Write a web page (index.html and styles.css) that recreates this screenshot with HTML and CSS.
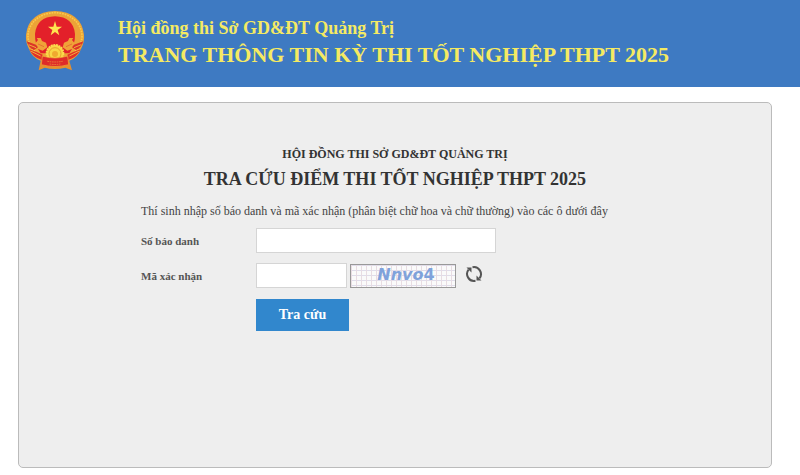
FILE: index.html
```html
<!DOCTYPE html>
<html lang="vi">
<head>
  <meta charset="UTF-8" />
  <meta name="viewport" content="width=device-width, initial-scale=1.0"/>
  <title>Tra cứu điểm thi tốt nghiệp THPT 2025</title>
  <link rel="stylesheet" href="styles.css">
</head>
<body>
  <header class="header">
    <svg class="emblem" viewBox="45 30 180 186" aria-hidden="true">
      <!-- rice wreath and red field -->
      <path d="M92 182 Q66 174 56 145 Q46 124 48 104 Q56 36 135 33 Q214 36 222 104 Q224 124 214 145 Q204 174 178 182 Z" fill="#eca337"/>
      <ellipse cx="135" cy="108" rx="81" ry="70" fill="none" stroke="#f8cb4c" stroke-width="5" stroke-dasharray="5 3"/>
      <path d="M92 160 Q74 136 75 102 Q80 51 135 49 Q190 51 195 102 Q196 136 178 160 Z" fill="#e3202a"/>
      <path d="M74 132 L84 120 L80 114 L92 114 L96 123 L108 128 L112 142 L98 152 L82 146 Z" fill="#f0a238"/>
      <path d="M196 132 L186 120 L190 114 L178 114 L174 123 L162 128 L158 142 L172 152 L188 146 Z" fill="#f0a238"/>
      <path d="M84 132 L102 140 M186 132 L168 140" stroke="#df5b2c" stroke-width="2"/>
      <!-- star -->
      <path d="M135 63 L140 80 L156 80 L143 90 L148 106 L135 96 L122 106 L127 90 L114 80 L130 80 Z" fill="#ffe550"/>
      <!-- cog wheel -->
      <circle cx="135" cy="160" r="25" fill="#f9d546" stroke="#fbd94c" stroke-width="6" stroke-dasharray="6 2"/>
      <circle cx="135" cy="161" r="18" fill="none" stroke="#eba02f" stroke-width="3"/>
      <circle cx="135" cy="162" r="9" fill="#f0a92f"/>
      <!-- ribbon -->
      <path d="M50 124 Q60 128 78 134 L84 142 L72 150 Q56 144 50 124 Z" fill="#dc3528"/>
      <path d="M220 124 Q210 128 192 134 L186 142 L198 150 Q214 144 220 124 Z" fill="#dc3528"/>
      <path d="M58 148 Q76 154 98 164 L96 180 Q68 172 58 148 Z" fill="#e23027"/>
      <path d="M212 148 Q194 154 172 164 L174 180 Q202 172 212 148 Z" fill="#e23027"/>
      <path d="M56 134 L78 143 M62 153 L92 168 M214 134 L192 143 M208 153 L178 168" stroke="#f2ae3c" stroke-width="3"/>
      <path d="M92 182 L104 176 L166 176 L178 182 L186 211 L166 203 Q135 211 104 203 L86 211 Z" fill="#e6902e"/>
      <path d="M97 168 Q135 180 173 168 L176 194 Q135 205 94 194 Z" fill="#df2b29" stroke="#f0aa3a" stroke-width="2"/>
      <path d="M112 184 Q135 188 158 184 M119 192 Q135 195 151 192" fill="none" stroke="#f0a23b" stroke-width="2" stroke-dasharray="5 2"/>
    </svg>
    <div class="header-text">
      <p class="org">Hội đồng thi Sở GD&amp;ĐT Quảng Trị</p>
      <h1>TRANG THÔNG TIN KỲ THI TỐT NGHIỆP THPT 2025</h1>
    </div>
  </header>

  <main class="panel">
    <div class="lookup">
      <p class="sub-title">HỘI ĐỒNG THI SỞ GD&amp;ĐT QUẢNG TRỊ</p>
      <h2>TRA CỨU ĐIỂM THI TỐT NGHIỆP THPT 2025</h2>

      <form id="lookupForm">
        <p class="hint">Thí sinh nhập số báo danh và mã xác nhận (phân biệt chữ hoa và chữ thường) vào các ô dưới đây</p>

        <div class="row">
          <label for="sbd">Số báo danh</label>
          <input type="text" id="sbd" class="sbd" />
        </div>

        <div class="row">
          <label for="captcha">Mã xác nhận</label>
          <input type="text" id="captcha" class="code" />
          <div class="captcha"><i>Nnvo</i>4</div>
          <button type="button" class="refresh" aria-label="Đổi mã">
            <svg viewBox="0 0 18 18" aria-hidden="true">
              <path d="M3.6 4.6 A7 7 0 0 0 10.5 15.8 M14.4 13.4 A7 7 0 0 0 7.5 2.2" fill="none" stroke="#555" stroke-width="2"/>
              <path d="M1.5 2.5 H6.5 V7.5 Z M16.5 15.5 H11.5 V10.5 Z" fill="#555"/>
            </svg>
          </button>
        </div>

        <button type="submit" class="submit">Tra cứu</button>
      </form>
    </div>
  </main>
</body>
</html>
```

FILE: styles.css
```css
* {
  box-sizing: border-box;
}

body {
  margin: 0;
  background: #fff;
  font-family: "Liberation Serif", "Times New Roman", serif;
  color: #333;
}

h1, h2, p {
  margin: 0;
}

.header {
  display: flex;
  align-items: flex-start;
  gap: 33px;
  padding: 10px 25px 15px;
  background: #3e7ac2;
  color: #f5ea62;
}

.emblem {
  width: 60px;
  height: 62px;
  flex-shrink: 0;
}

.header-text {
  padding-top: 6px;
  font-weight: bold;
}

.org {
  font-size: 18px;
  line-height: 24px;
}

h1 {
  font-size: 22px;
  line-height: 30px;
}

.panel {
  margin: 15px 28px 8px 18px;
  padding: 41px 20px 136px;
  background: #eee;
  border: 1px solid #bbb;
  border-radius: 5px;
}

.lookup {
  max-width: 508px;
  margin: 0 auto;
}

.sub-title {
  text-align: center;
  font-size: 12px;
  font-weight: bold;
  line-height: 20px;
}

h2 {
  margin-top: 3px;
  text-align: center;
  font-size: 18px;
  line-height: 24px;
}

.hint {
  margin: 11px 0 8px;
  font-size: 12px;
  line-height: 18px;
  color: #444;
}

.row {
  display: flex;
  align-items: center;
  margin-bottom: 10px;
}

label {
  width: 115px;
  font-size: 11px;
  font-weight: bold;
  color: #555;
}

input {
  height: 25px;
  padding: 2px 6px;
  background: #fff;
  border: 1px solid #d5d5d5;
  font-family: inherit;
  font-size: 12px;
}

.sbd {
  width: 240px;
}

.code {
  width: 91px;
}

.captcha {
  width: 106px;
  height: 24px;
  margin-left: 3px;
  padding-left: 6px;
  border: 1px solid #999;
  background-color: #fafafa;
  background-image:
    linear-gradient(to right, #e8dce2 1px, transparent 1px),
    linear-gradient(to bottom, #dfdcea 1px, transparent 1px);
  background-size: 5px 5px;
  font-family: "DejaVu Sans", sans-serif;
  font-size: 16px;
  font-weight: bold;
  line-height: 20px;
  text-align: center;
  color: #7fa2db;
}

.refresh {
  width: 18px;
  height: 18px;
  margin: 0 0 4px 9px;
  padding: 0;
  border: none;
  background: none;
  cursor: pointer;
}

.refresh svg {
  display: block;
  width: 18px;
  height: 18px;
}

.submit {
  display: block;
  width: 93px;
  height: 32px;
  margin: 11px 0 0 115px;
  padding: 0;
  border: none;
  background: #3187cd;
  color: #fff;
  font-family: inherit;
  font-size: 14px;
  font-weight: bold;
  cursor: pointer;
}

.submit:hover {
  background: #2874b5;
}
```
